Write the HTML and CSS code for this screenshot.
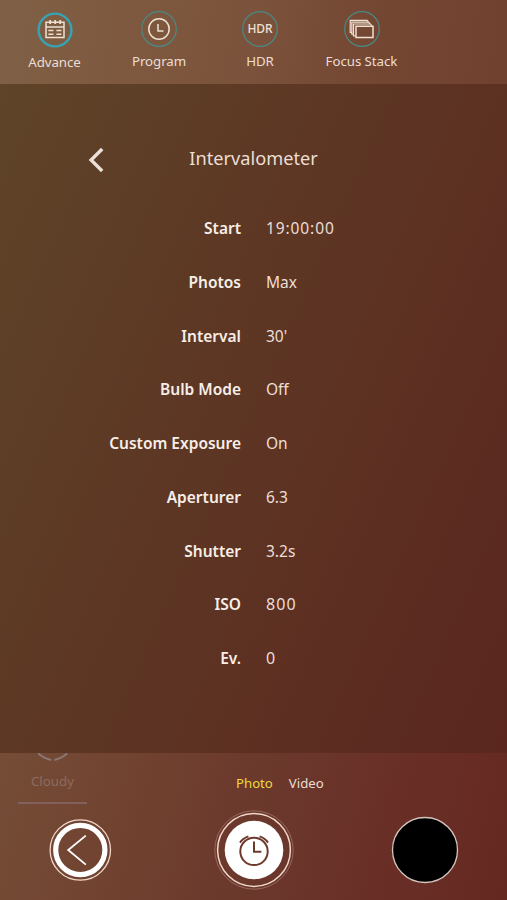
FILE: index.html
```html
<!DOCTYPE html>
<html lang="en">
<head>
<meta charset="utf-8">
<title>Intervalometer</title>
<link rel="stylesheet" href="styles.css">
</head>
<body>
<div class="app">
  <nav class="modes">
    <div class="mode mode-advance">
      <svg width="38" height="38" viewBox="0 0 38 38" fill="none">
        <circle cx="19" cy="19" r="16.4" stroke="#37a4b5" stroke-width="2.4"/>
        <g stroke="#eee1d2" stroke-width="1.5">
          <path d="M10 11.3h18v15.2H10zM10 16h18"/>
          <path d="M14.2 9v4M19.2 9v4M24.2 9v4" stroke-width="1.8"/>
          <path d="M12.4 19.5h5M20.4 19.5h5M12.4 23.2h5M20.4 23.2h5"/>
        </g>
      </svg>
      <span>Advance</span>
    </div>
    <div class="mode mode-program">
      <svg width="38" height="38" viewBox="0 0 38 38" fill="none">
        <circle cx="19" cy="19" r="17.3" stroke="#4a8985" stroke-width="1.2"/>
        <circle cx="19" cy="19" r="10.2" stroke="#eee1d2" stroke-width="1.5"/>
        <path d="M18 14v7h5.5" stroke="#eee1d2" stroke-width="1.5"/>
      </svg>
      <span>Program</span>
    </div>
    <div class="mode mode-hdr">
      <svg width="38" height="38" viewBox="0 0 38 38" fill="none">
        <circle cx="19" cy="19" r="17.3" stroke="#4a8985" stroke-width="1.2"/>
        <text class="hdr-glyph" x="19" y="23.2" text-anchor="middle" textLength="25" lengthAdjust="spacingAndGlyphs">HDR</text>
      </svg>
      <span>HDR</span>
    </div>
    <div class="mode mode-stack">
      <svg width="38" height="38" viewBox="0 0 38 38" fill="none">
        <circle cx="19" cy="19" r="17.3" stroke="#4a8985" stroke-width="1.2"/>
        <g stroke="#eee1d2" stroke-width="1.2">
          <path d="M13 16.2h17v11.4H13z" stroke-width="1.5"/>
          <path d="M12.5 25.8h-2V14h17l1.5 1.8M10 24.2H8.8V12.2h16.8l1.4 1.4M8.3 22.5H7.2V10.4h16.9l1.4 1.4"/>
        </g>
      </svg>
      <span>Focus Stack</span>
    </div>
  </nav>

  <main class="panel">
    <header class="panel-head">
      <svg class="back" width="18" height="28" viewBox="0 0 18 28" fill="none">
        <path d="M15.2 3 4.1 14l11.1 11" stroke="#e9e0da" stroke-width="3.4"/>
      </svg>
      <h1>Intervalometer</h1>
    </header>
    <dl class="settings">
      <dt>Start</dt><dd class="time">19:00:00</dd>
      <dt>Photos</dt><dd>Max</dd>
      <dt>Interval</dt><dd>30'</dd>
      <dt>Bulb Mode</dt><dd>Off</dd>
      <dt>Custom Exposure</dt><dd>On</dd>
      <dt>Aperturer</dt><dd>6.3</dd>
      <dt>Shutter</dt><dd>3.2s</dd>
      <dt>ISO</dt><dd class="iso">800</dd>
      <dt>Ev.</dt><dd class="iso">0</dd>
    </dl>
  </main>

  <footer class="controls">
    <div class="preset">
      <svg width="36" height="10" viewBox="0 0 36 10" fill="none">
        <path d="M3.2 .3Q8.3 5.3 16.2 7M19.4 7Q27 5.3 32.2 .3" stroke="#8b7776" stroke-width="2"/>
      </svg>
      <span>Cloudy</span>
    </div>
    <div class="tabs"><span class="active">Photo</span><span>Video</span></div>
    <svg class="button" width="80" height="80" viewBox="0 0 80 80" fill="none">
      <circle cx="40.3" cy="40" r="30.2" stroke="#f1d8cc" stroke-width="1.3"/>
      <circle cx="40.3" cy="40" r="24.6" stroke="#fff" stroke-width="5.2"/>
      <path d="M45.8 25.6 28.2 40l17.6 14.6" stroke="#fff" stroke-width="1.8"/>
    </svg>
    <svg class="button" width="80" height="80" viewBox="0 0 80 80" fill="none">
      <circle cx="40" cy="40" r="39.2" stroke="#98685d" stroke-width="1"/>
      <circle cx="40" cy="40" r="36.4" stroke="#f1d8cc" stroke-width="1.5"/>
      <circle cx="40" cy="40" r="29.3" fill="#fff"/>
      <g stroke="#6d392d" stroke-width="2">
        <circle cx="40" cy="41.4" r="13.7"/>
        <path d="M40 31.5v10.2h7.4M26 32.6q2.6-4.2 8.4-6.2M54 32.6q-2.6-4.2-8.4-6.2"/>
      </g>
    </svg>
    <svg class="button" width="80" height="80" viewBox="0 0 80 80">
      <circle cx="40" cy="40" r="32.5" fill="#000" stroke="#d5c5bf" stroke-width="1.3"/>
    </svg>
  </footer>
</div>
</body>
</html>
```
FILE: styles.css
```css
* { box-sizing: border-box; }

body {
  margin: 0;
  font-family: "Noto Sans", sans-serif;
  color: #ecded5;
}

.app {
  width: 507px;
  height: 900px;
  display: grid;
  grid-template-rows: 84px 669px 147px;
  overflow: hidden;
}

.modes {
  display: grid;
  grid-template-columns: 109px 100px 102px 101px;
  background: linear-gradient(98deg, #7f6046 0%, #7e593f 25%, #7b523b 50%, #734632 75%, #70412f 100%);
}

.mode {
  display: flex;
  flex-direction: column;
  align-items: center;
  padding-top: 10px;
  font-size: 13.3px;
  line-height: 18px;
  letter-spacing: -0.06px;
  white-space: nowrap;
}

.mode svg { flex: none; margin-bottom: 4px; }
.mode-advance { padding-top: 11px; }
.hdr-glyph { font-size: 12.3px; font-weight: 500; fill: #eee1d2; }

.panel {
  padding-top: 58px;
  background: linear-gradient(114deg, #5f4429 0%, #5d3b25 28%, #5d3423 52%, #5c2c21 78%, #5a261e 100%);
}

.panel-head {
  display: grid;
  grid-template-columns: 87px 18px 297px 105px;
  height: 59px;
}

.back {
  grid-column: 2;
  margin-top: 4px;
}

h1 {
  margin: 0;
  font-size: 18.2px;
  line-height: 32px;
  font-weight: 400;
  text-align: center;
}

.settings {
  display: grid;
  grid-template-columns: 241px 1fr;
  grid-auto-rows: 53.75px;
  column-gap: 25px;
  margin: 0;
  font-size: 15.5px;
  line-height: 54px;
}

dt {
  font-weight: 600;
  text-align: right;
  color: #f7eee7;
}

dd { margin: 0; }
.time { letter-spacing: 0.9px; }
.iso { font-size: 16px; letter-spacing: 1.1px; }

.controls {
  display: grid;
  grid-template-columns: 160px 188px 154px;
  grid-template-rows: 57px 80px;
  justify-items: center;
  background: linear-gradient(105deg, #754d37 0%, #70412f 28%, #6b382c 50%, #692f27 75%, #652821 100%);
}

.preset {
  justify-self: start;
  width: 69px;
  height: 51px;
  margin-left: 18px;
  border-bottom: 2px solid #81605d;
  display: flex;
  flex-direction: column;
  align-items: center;
  color: #8c6b60;
  font-size: 13.3px;
  line-height: 18px;
}

.preset svg { flex: none; margin-bottom: 9px; }

.tabs {
  grid-column: 2 / 4;
  justify-self: start;
  display: flex;
  gap: 16px;
  margin-left: 76px;
  font-size: 13.2px;
  line-height: 60px;
}

.active { color: #edd93d; }
```
